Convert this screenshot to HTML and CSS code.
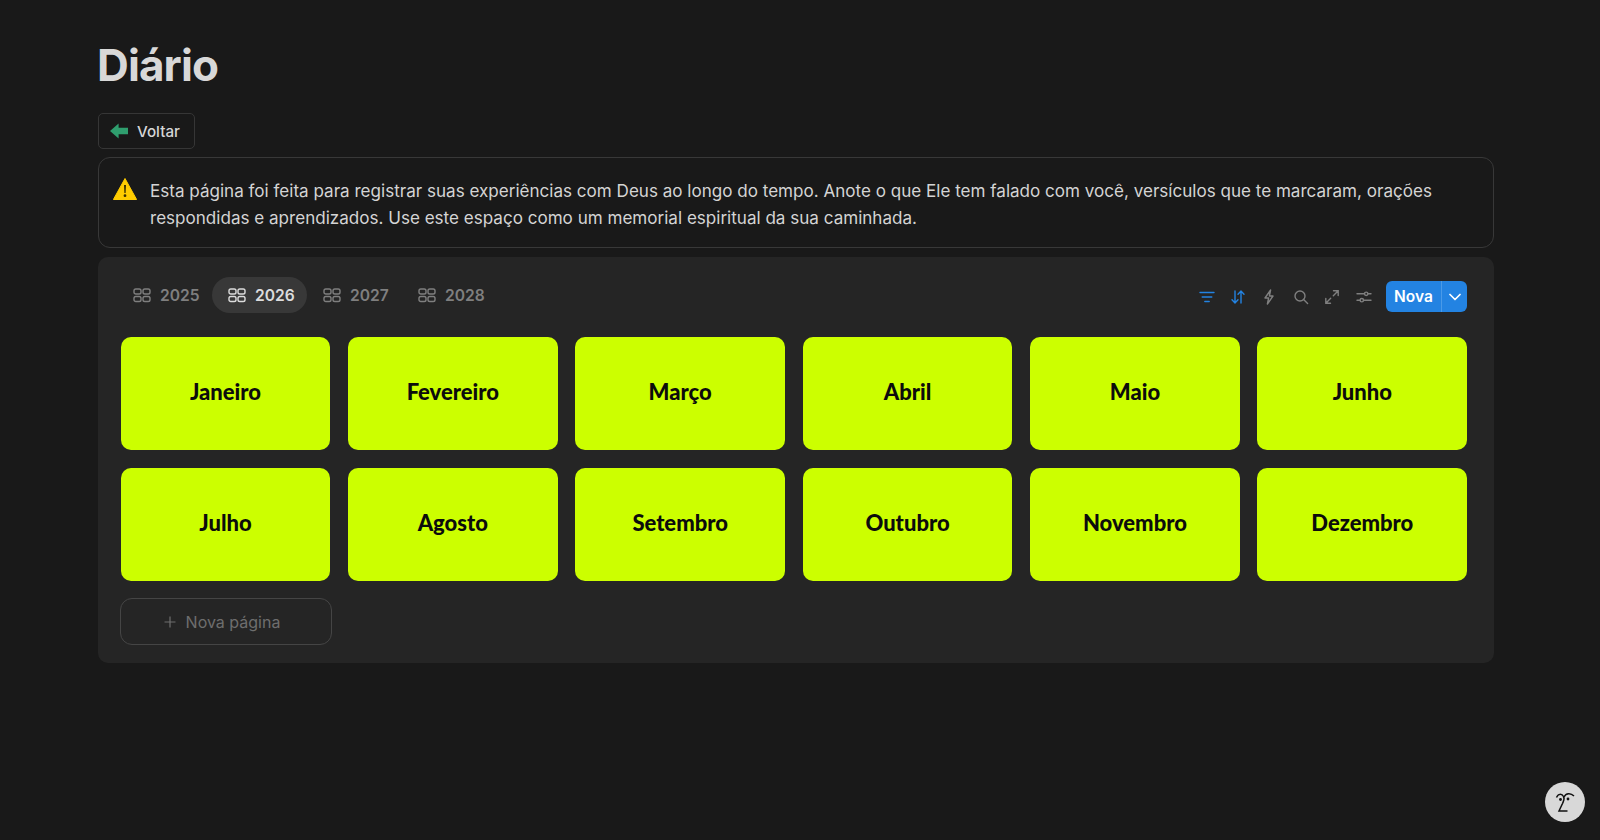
FILE: index.html
```html
<!DOCTYPE html>
<html lang="pt">
<head>
<meta charset="utf-8">
<title>Diário</title>
<link rel="stylesheet" href="styles.css">
</head>
<body>
<main class="page">
  <h1 class="title">Diário</h1>
  <a class="back"><svg class="back-icon" viewBox="0 0 18 16"><path d="M0 8 8.6 0.6V4.8H18V11.2H8.6V15.4Z"/></svg>Voltar</a>
  <div class="callout">
    <svg class="warn" viewBox="0 0 24 22"><path d="M12 0.5 23.6 21.5H0.4Z" fill="#ffcc00" stroke="#ffcc00" stroke-linejoin="round"/><path d="M11 7h2l-.4 8h-1.2ZM12 16.3a1.4 1.4 0 1 1 0 2.8 1.4 1.4 0 0 1 0-2.8Z" fill="#3a3000"/></svg>
    <p class="callout-text">Esta página foi feita para registrar suas experiências com Deus ao longo do tempo. Anote o que Ele tem falado com você, versículos que te marcaram, orações respondidas e aprendizados. Use este espaço como um memorial espiritual da sua caminhada.</p>
  </div>
  <section class="panel">
    <div class="toolbar">
      <div class="tabs">
        <div class="tab"><svg class="grid-icon" viewBox="0 0 18 16"><rect x="1" y="2" width="7" height="5" rx="1.8"/><rect x="10" y="2" width="7" height="5" rx="1.8"/><rect x="1" y="9.5" width="7" height="5" rx="1.8"/><rect x="10" y="9.5" width="7" height="5" rx="1.8"/></svg>2025</div>
        <div class="tab tab-active"><svg class="grid-icon" viewBox="0 0 18 16"><rect x="1" y="2" width="7" height="5" rx="1.8"/><rect x="10" y="2" width="7" height="5" rx="1.8"/><rect x="1" y="9.5" width="7" height="5" rx="1.8"/><rect x="10" y="9.5" width="7" height="5" rx="1.8"/></svg>2026</div>
        <div class="tab"><svg class="grid-icon" viewBox="0 0 18 16"><rect x="1" y="2" width="7" height="5" rx="1.8"/><rect x="10" y="2" width="7" height="5" rx="1.8"/><rect x="1" y="9.5" width="7" height="5" rx="1.8"/><rect x="10" y="9.5" width="7" height="5" rx="1.8"/></svg>2027</div>
        <div class="tab"><svg class="grid-icon" viewBox="0 0 18 16"><rect x="1" y="2" width="7" height="5" rx="1.8"/><rect x="10" y="2" width="7" height="5" rx="1.8"/><rect x="1" y="9.5" width="7" height="5" rx="1.8"/><rect x="10" y="9.5" width="7" height="5" rx="1.8"/></svg>2028</div>
      </div>
      <div class="actions">
        <svg class="tool tool-blue" viewBox="0 0 16 16"><path d="M1 3.5h14M3.2 8h9.6M5.8 12.5h4.4"/></svg>
        <svg class="tool tool-blue" viewBox="0 0 16 16"><path d="M5 2v12M2 10.8 5 14l3-3.2M11 14V2M8 5.2 11 2l3 3.2"/></svg>
        <svg class="tool" viewBox="0 0 16 16"><path d="M9.6 1 4 9h3.6l-1.2 6L12 7H8.4Z" stroke-linejoin="round"/></svg>
        <svg class="tool" viewBox="0 0 16 16"><circle cx="7" cy="7" r="5"/><path d="m10.6 10.6 4 4"/></svg>
        <svg class="tool" viewBox="0 0 16 16"><path d="M9.5 1.8h4.7v4.7M14.2 1.8 9.3 6.7M6.5 14.2H1.8V9.5M1.8 14.2l4.9-4.9"/></svg>
        <svg class="tool" viewBox="0 0 16 16"><path d="M1 4.8h7.5M12 4.8h3M1 11.2h3M7.5 11.2H15"/><circle cx="10.2" cy="4.8" r="1.7"/><circle cx="5.8" cy="11.2" r="1.7"/></svg>
        <div class="new">
          <span class="new-label">Nova</span>
          <span class="new-caret"><svg class="caret" viewBox="0 0 12 8"><path d="M1 1.5 6 6.5 11 1.5"/></svg></span>
        </div>
      </div>
    </div>
    <div class="cards">
      <div class="card">Janeiro</div>
      <div class="card">Fevereiro</div>
      <div class="card">Março</div>
      <div class="card">Abril</div>
      <div class="card">Maio</div>
      <div class="card">Junho</div>
      <div class="card">Julho</div>
      <div class="card">Agosto</div>
      <div class="card">Setembro</div>
      <div class="card">Outubro</div>
      <div class="card">Novembro</div>
      <div class="card">Dezembro</div>
    </div>
    <div class="add"><svg class="plus" viewBox="0 0 12 12"><path d="M6 0.5v11M0.5 6h11"/></svg>Nova página</div>
  </section>
</main>
<div class="help">
  <svg class="face" viewBox="0 0 24 24"><path d="M3.5 7.5C5 3.5 9 3.5 10.5 6.5 12 9 11 10 9.5 13.5L6 21H14.5" /><path d="M11 7C13 3 17.5 2.5 21 6"/><circle cx="7.5" cy="9.5" r="1.4" class="eye"/><circle cx="15" cy="9" r="1.4" class="eye"/></svg>
</div>
</body>
</html>
```

FILE: styles.css
```css
* { box-sizing: border-box; }
html, body { margin: 0; height: 100%; }
body {
  background: #191919;
  color: #d4d4d4;
  font-family: Inter, "Liberation Sans", sans-serif;
  overflow: hidden;
}
.page {
  width: 1396px;
  margin-left: 98px;
  padding-top: 39px;
  display: flex;
  flex-direction: column;
  align-items: stretch;
}
.title {
  margin: 0 0 0 -1px;
  font-size: 44px;
  line-height: 52px;
  font-weight: 700;
  letter-spacing: -0.9px;
  color: #d8d8d8;
}
.back {
  align-self: flex-start;
  margin-top: 22px;
  width: 97px;
  height: 36px;
  border: 1px solid #363636;
  border-radius: 5px;
  display: flex;
  align-items: center;
  gap: 9px;
  padding-left: 11px;
  font-size: 15.2px;
  font-weight: 500;
  color: #d6d6d6;
}
.back-icon { width: 18px; height: 16px; fill: #2f9e6e; }
.callout {
  margin-top: 8px;
  height: 91px;
  border: 1px solid #383838;
  border-radius: 12px;
  display: flex;
  padding: 20px 30px 0 14px;
  gap: 13px;
}
.warn { width: 24px; height: 22px; flex: none; }
.callout-text {
  margin: 0;
  font-size: 17.07px;
  line-height: 26.5px;
  color: #d4d4d4;
}
.panel {
  margin-top: 9px;
  height: 406px;
  background: #252525;
  border-radius: 10px;
  padding: 20px 27px 0 19px;
}
.toolbar {
  display: flex;
  justify-content: space-between;
  align-items: center;
  height: 36px;
}
.tabs { display: flex; }
.tab {
  width: 95px;
  height: 36px;
  border-radius: 18px;
  display: flex;
  align-items: center;
  gap: 9px;
  padding-left: 16px;
  font-size: 15.6px;
  font-weight: 600;
  color: #7f7f7f;
}
.tab-active { background: #383838; color: #dcdcdc; }
.grid-icon { width: 18px; height: 16px; fill: none; stroke: currentColor; stroke-width: 1.4; }
.actions { display: flex; align-items: center; gap: 15.4px; margin-top: 3px; }
.tool {
  width: 16px;
  height: 16px;
  fill: none;
  stroke: #7f7f7f;
  stroke-width: 1.4;
  stroke-linecap: round;
}
.tool-blue { stroke: #2383e2; }
.new {
  display: flex;
  width: 81px;
  height: 31px;
  margin-left: -1px;
  background: #2383e2;
  border-radius: 6px;
  color: #fff;
  align-items: stretch;
}
.new-label {
  width: 55px;
  display: flex;
  align-items: center;
  justify-content: center;
  font-size: 15.5px;
  font-weight: 600;
}
.new-caret {
  flex: 1;
  display: flex;
  align-items: center;
  justify-content: center;
  border-left: 1px solid #4a9ae8;
}
.caret { width: 12px; height: 8px; fill: none; stroke: #fff; stroke-width: 1.7; stroke-linecap: round; stroke-linejoin: round; }
.cards {
  margin-top: 24px;
  margin-left: 3.6px;
  display: grid;
  grid-template-columns: repeat(6, 209.7px);
  column-gap: 17.7px;
  row-gap: 18px;
}
.card {
  height: 113px;
  background: #ccff00;
  border-radius: 10px;
  display: flex;
  align-items: center;
  justify-content: center;
  padding-bottom: 5px;
  font-family: "Lato Black", Lato, "Liberation Sans", sans-serif;
  font-size: 22px;
  font-weight: 900;
  color: #0c0c0c;
}
.add {
  margin-top: 17px;
  margin-left: 3px;
  width: 212px;
  height: 47px;
  border: 1px solid #454545;
  border-radius: 12px;
  display: flex;
  align-items: center;
  justify-content: center;
  gap: 10px;
  padding-right: 8px;
  font-size: 16px;
  color: #6e6e6e;
}
.plus { width: 12px; height: 12px; fill: none; stroke: #6e6e6e; stroke-width: 1.2; }
.help {
  position: fixed;
  left: 1545px;
  top: 782px;
  width: 40px;
  height: 40px;
  border-radius: 50%;
  background: #d8d8d8;
  display: flex;
  align-items: center;
  justify-content: center;
}
.face { width: 24px; height: 24px; fill: none; stroke: #111; stroke-width: 1.5; }
.eye { fill: #111; stroke: none; }
```
